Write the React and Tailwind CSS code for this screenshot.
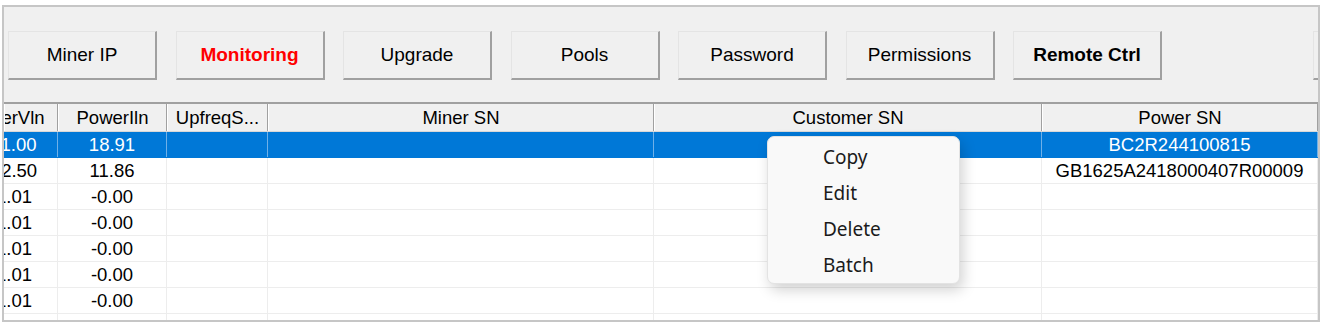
import React from "react";

const buttons = [
  { label: "Miner IP", cls: "text-black" },
  { label: "Monitoring", cls: "text-[#ff0000] font-bold" },
  { label: "Upgrade", cls: "text-black" },
  { label: "Pools", cls: "text-black" },
  { label: "Password", cls: "text-black" },
  { label: "Permissions", cls: "text-black" },
  { label: "Remote Ctrl", cls: "text-black font-bold" },
];

// visible column widths (table is scrolled horizontally, first one is clipped)
const cols = [54, 109, 101, 386, 388, 276];
const headers = ["PowerVln", "PowerIln", "UpfreqS...", "Miner SN", "Customer SN", "Power SN"];

const rows = [
  ["11.00", "18.91", "", "", "", "BC2R244100815"],
  ["12.50", "11.86", "", "", "", "GB1625A2418000407R00009"],
  ["1.01", "-0.00", "", "", "", ""],
  ["1.01", "-0.00", "", "", "", ""],
  ["1.01", "-0.00", "", "", "", ""],
  ["1.01", "-0.00", "", "", "", ""],
  ["1.01", "-0.00", "", "", "", ""],
  ["1.01", "-0.00", "", "", "", ""],
];

const Cell = ({ i, text, className, head }) => {
  if (i === 0) {
    return (
      <div className={`shrink-0 overflow-hidden h-full ${className}`} style={{ width: cols[0] }}>
        <div
          className={`w-[100px] h-full flex items-center justify-center whitespace-nowrap ${
            head ? "ml-[-50px]" : "ml-[-40px]"
          }`}
        >
          {text}
        </div>
      </div>
    );
  }
  return (
    <div
      className={`shrink-0 h-full flex items-center justify-center whitespace-nowrap overflow-hidden ${className}`}
      style={{ width: cols[i] }}
    >
      {text}
    </div>
  );
};

const ContextMenu = () => (
  <div className="absolute left-[767px] top-[136px] w-[193px] h-[148px] py-[2px] bg-[#f9f9f9] rounded-[7px] border border-[#e3e3e3] shadow-[3px_6px_14px_rgba(0,0,0,0.18)] font-['Noto_Sans',sans-serif] text-[19px] text-[#1b1b1b]">
    {["Copy", "Edit", "Delete", "Batch"].map((m) => (
      <div key={m} className="h-[36px] pl-[55px] flex items-center">
        {m}
      </div>
    ))}
  </div>
);

const App = () => {
  return (
    <div className="relative w-[1323px] h-[326px] bg-white pt-[5px] pl-[2px] font-['Liberation_Sans',Arial,sans-serif]">
      <div className="w-[1318px] h-[317px] border-2 border-[#c6c6c6] bg-[#f0f0f0] flex flex-col overflow-hidden">
        {/* toolbar buttons */}
        <div className="h-[95px] shrink-0 flex items-start pt-[24px] pl-[4px] gap-[18.5px] overflow-hidden">
          {buttons.map((b) => (
            <button
              key={b.label}
              className={`shrink-0 w-[149px] h-[49px] bg-[#f0f0f0] border-t border-l border-[#e4e4e4] border-b-2 border-r-2 border-b-[#a0a0a0] border-r-[#a0a0a0] text-[19px] ${b.cls}`}
            >
              {b.label}
            </button>
          ))}
          <button className="shrink-0 w-[149px] h-[49px] ml-[132px] bg-[#f0f0f0] border-t border-l border-[#e4e4e4] border-b-2 border-r-2 border-b-[#a0a0a0] border-r-[#a0a0a0]" />
        </div>

        {/* list view */}
        <div className="flex-1 flex flex-col border-t-2 border-[#a0a0a0] bg-white overflow-hidden text-[18.5px] text-black">
          <div className="h-[28px] shrink-0 flex bg-[#f0f0f0] border-b border-[#d8d8d8]">
            {headers.map((h, i) => (
              <Cell key={h} i={i} head text={h} className="border-l border-white border-r border-r-[#a0a0a0]" />
            ))}
          </div>
          {rows.map((r, ri) => (
            <div
              key={ri}
              className={`h-[26px] shrink-0 flex border-b ${
                ri === 0 ? "bg-[#0078d7] text-white border-[#0078d7]" : "border-[#ededed]"
              }`}
            >
              {r.map((t, i) => (
                <Cell
                  key={i}
                  i={i}
                  text={t}
                  className={ri === 0 ? "border-r border-[#6fb0e8]" : "border-r border-[#ededed]"}
                />
              ))}
            </div>
          ))}
        </div>
      </div>
      <ContextMenu />
    </div>
  );
};

export default App;
